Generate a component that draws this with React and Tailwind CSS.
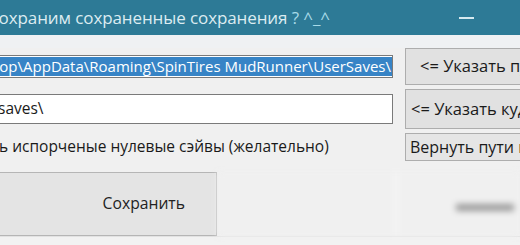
const font = { fontFamily: '"Open Sans", "Noto Sans", sans-serif' };

const WinButton = ({ children, className = "" }) => (
  <div
    className={`flex items-center bg-[#e1e1e1] border border-[#adadad] text-[#1a1a1a] whitespace-nowrap overflow-hidden ${className}`}
  >
    {children}
  </div>
);

export default function App() {
  return (
    <div className="w-[520px] h-[245px] overflow-hidden bg-[#f0f0f0]" style={font}>
      {/* title bar */}
      <div className="h-[35px] bg-[#2d7a96] flex items-center justify-between pr-[46px]">
        <div className="-ml-[12px] text-[17px] text-[#dcecf1] whitespace-nowrap tracking-[-0.1px]">
          Сохраним сохраненные сохранения <span className="text-[#a9dbe8]">? ^_^</span>
        </div>
        <div className="w-[15px] h-[2px] bg-[#d6e9ef] mt-[1px]" />
      </div>

      <div className="h-[13px] bg-[#eff1f3]" />

      {/* row 1 */}
      <div className="flex h-[37px]">
        <div className="w-[393px] flex items-center">
          <div className="w-full h-[23px] bg-white border border-[#7a7a7a] border-l-0 flex items-center justify-end overflow-hidden">
            <span className="bg-[#3784c6] text-white text-[15px] leading-[19px] whitespace-nowrap pr-[1px] shrink-0">
              C:\Users\User\Desktop\AppData\Roaming\SpinTires MudRunner\UserSaves\
            </span>
          </div>
        </div>
        <WinButton className="ml-[12px] flex-1 -mr-[20px] pl-[14px] text-[16.5px]">
          &lt;= Указать путь
        </WinButton>
      </div>

      {/* row 2 */}
      <div className="flex h-[40px] mt-[4px]">
        <div className="w-[393px] flex items-center">
          <div className="w-full h-[30px] bg-white border border-[#7a7a7a] border-l-0 flex items-center overflow-hidden">
            <span className="text-[15.5px] text-[#1a1a1a] whitespace-nowrap -ml-[2px]">saves\</span>
          </div>
        </div>
        <WinButton className="ml-[12px] flex-1 -mr-[20px] pl-[5px] text-[16.5px]">
          &lt;= Указать куда
        </WinButton>
      </div>

      {/* row 3 */}
      <div className="flex h-[28px] mt-[4px]">
        <div className="w-[393px] flex items-center overflow-hidden">
          <span className="text-[15.5px] text-[#1a1a1a] whitespace-nowrap -ml-[1px]">
            ь испорченые нулевые сэйвы (желательно)
          </span>
        </div>
        <WinButton className="ml-[12px] flex-1 -mr-[20px] pl-[4px] bg-[#e5e5e5] text-[16px]">
          Вернуть пути по умолчанию
        </WinButton>
      </div>

      {/* bottom buttons */}
      <div className="flex h-[64px] mt-[11px]">
        <div className="w-[217px] bg-[#e4e4e4] border-y border-r border-[#b5b5b5] flex items-center justify-end pr-[31px]">
          <span className="text-[15.7px] text-[#222]">Сохранить</span>
        </div>
        <div className="flex-1 flex bg-[#f4f4f4] blur-[3px]">
          <div className="w-[180px] border-r-2 border-[#fbfbfb] bg-[#f0f0f0]" />
          <div className="flex-1 flex items-center justify-end pr-[6px] bg-[#f0f0f0]">
            <div className="w-[58px] h-[7px] bg-[#9a9a9a] mt-[6px]" />
          </div>
        </div>
      </div>

      <div className="h-[10px] bg-[#f2f2f2] border-t border-[#e2e2e2]" />
    </div>
  );
}
